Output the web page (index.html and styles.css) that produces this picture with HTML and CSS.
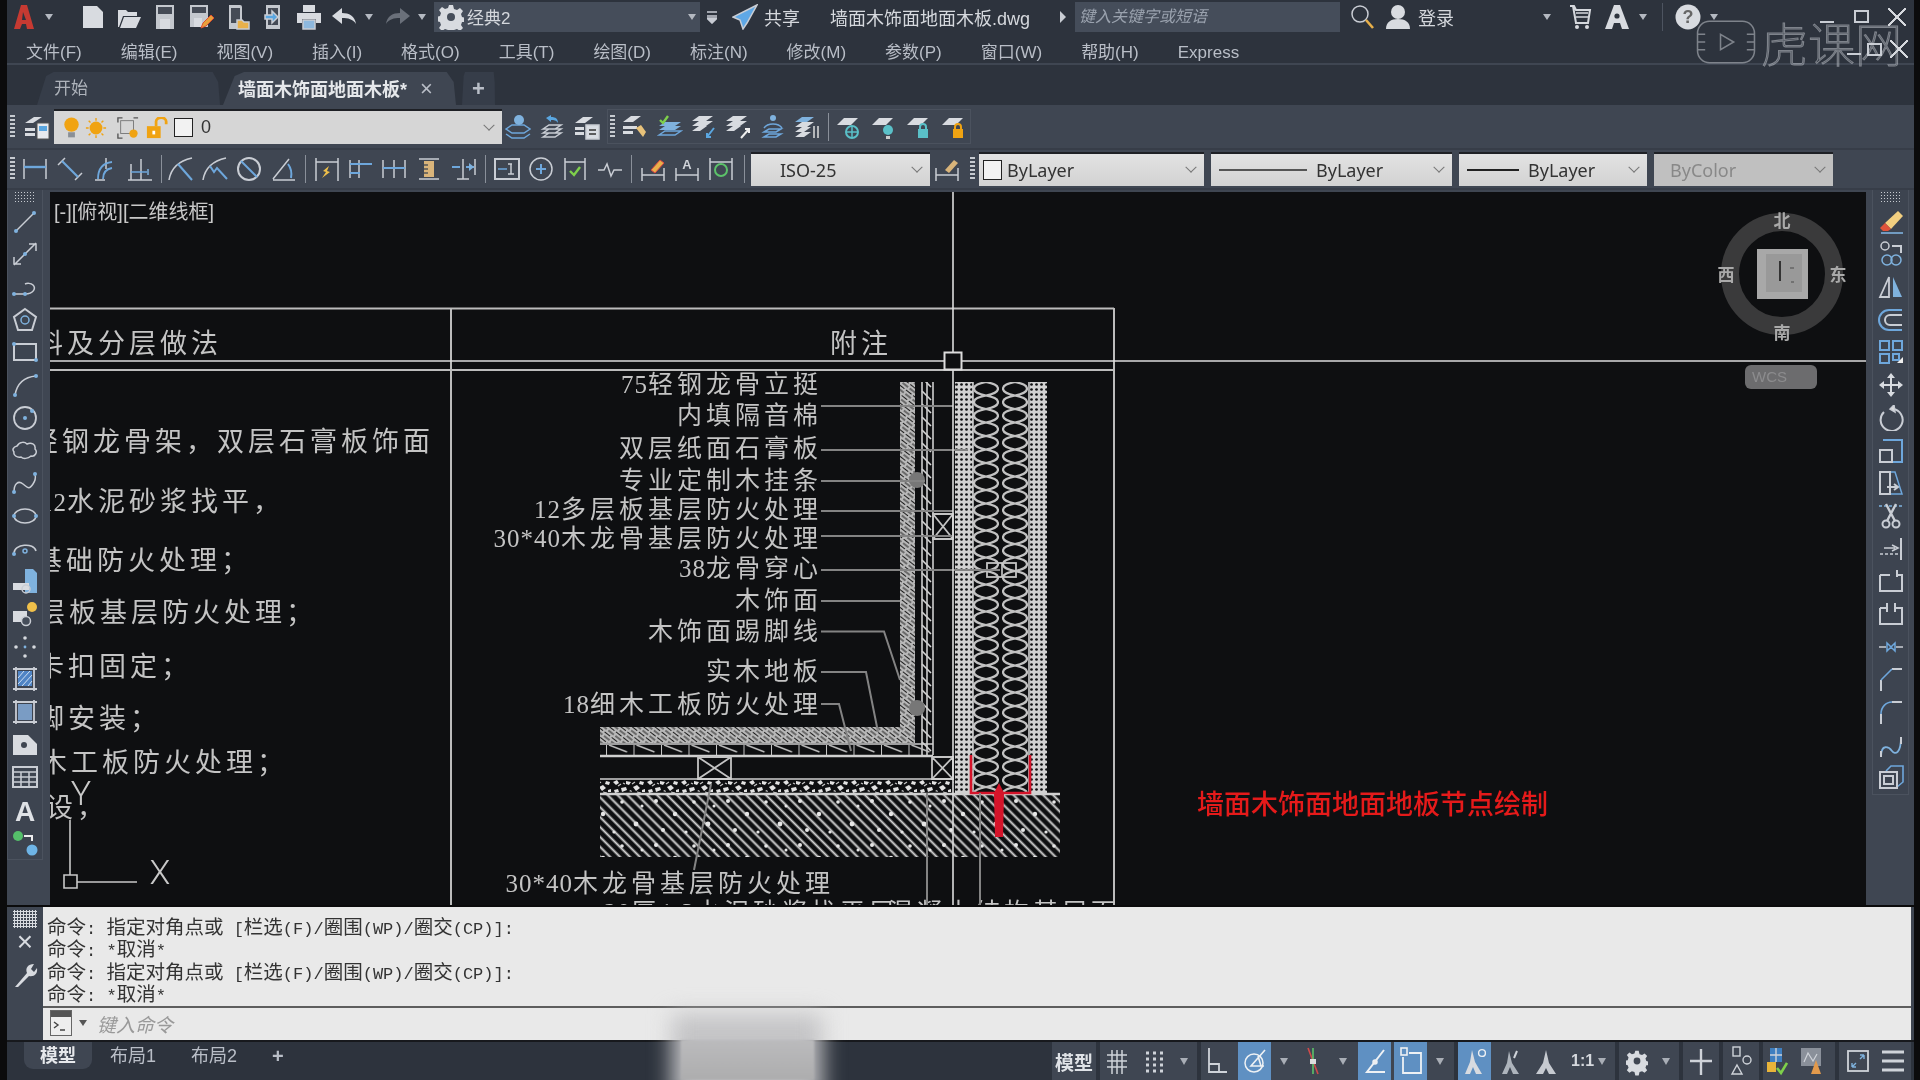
FILE: index.html
```html
<!DOCTYPE html>
<html lang="zh-CN">
<head>
<meta charset="utf-8">
<title>AutoCAD</title>
<link rel="stylesheet" href="styles.css">
</head>
<body>
<div class="app">

  <!-- title bar -->
  <header class="titlebar">
    <svg class="logo ml6" viewBox="0 0 22 26"><path d="M8 1h6l7 24h-7l-1-5H9l-2 5H1z" fill="#c63a32"/><path d="M10 8l-1 8h4z" fill="#2d333d"/></svg>
    <i class="caret ml10"></i>
    <svg class="ic ml27" viewBox="0 0 26 26"><path class="wf" d="M3 2h14l6 6v16H3z"/></svg>
    <svg class="ic ml10" viewBox="0 0 26 26"><path class="wf" d="M2 6h8l2 2h9v4H7L3 23H2z"/><path class="wf" d="M8 13h17l-5 11H4z"/></svg>
    <svg class="ic ml10" viewBox="0 0 26 26"><path class="gf" d="M4 1h18v24H4z"/><path class="dk" d="M6 3h14v7H6z"/><path class="wf" d="M8 15h10v10H8z"/></svg>
    <svg class="ic ml10" viewBox="0 0 26 26"><path class="gf" d="M2 1h18v22H2z"/><path class="dk" d="M4 3h14v6H4z"/><path class="wf" d="M6 14h8v9H6z"/><path d="M13 24l2-5 8-8 3 3-8 8z" fill="#e8a03a" stroke="#e05030" stroke-width="1"/></svg>
    <svg class="ic ml10" viewBox="0 0 26 26"><path class="gf" d="M5 1h11a2 2 0 0 1 2 2v22H5z"/><path class="dk" d="M7 4h9v15H7z"/><path d="M13 16h5l2 2h5v7H13z" fill="#e8b04a"/></svg>
    <svg class="ic ml10" viewBox="0 0 26 26"><path class="gf" d="M6 1h14v24H6z"/><path class="dk" d="M8 4h10v17H8z"/><path d="M5 11h7V7l6 6-6 6v-4H5z" fill="#5aa6e0"/></svg>
    <svg class="ic ml10" viewBox="0 0 26 26"><path class="wf" d="M7 1h12v7H7zM1 9h24v10h-5v-4H6v4H1z"/><path d="M7 16h12v9H7z" fill="#8db8de"/></svg>
    <svg class="ic ml9" viewBox="0 0 26 26"><path class="wf" d="M1 12l10-8v5c7 0 13 3 14 11-3-5-8-6-14-6v6z"/></svg>
    <i class="caret ml8"></i>
    <svg class="ic ml12 dim" viewBox="0 0 26 26"><path d="M25 12l-10-8v5C8 9 2 12 1 20c3-5 8-6 14-6v6z" fill="#6a707a" stroke="none"/></svg>
    <i class="caret ml7"></i>
    <div class="combo ml8">
      <svg class="ic" viewBox="0 0 26 26"><path class="wf" d="M11 1h4l1 4 3 1 3-2 3 3-2 3 1 3 4 1-1 4-3 0-1 3 2 3-3 3-3-2-3 1-1 4h-4l-1-4-3-1-3 2-3-3 2-3-1-3-4-1v-4l4-1 1-3-2-3 3-3 3 2 3-1z"/><circle cx="13" cy="13" r="4" fill="#454d5a" stroke="none"/></svg>
      <span class="combotext">经典2</span>
      <i class="caret push"></i>
    </div>
    <svg class="eq ml7" viewBox="0 0 10 14"><path d="M0 2h10M0 6h10M0 8l5 5 5-5z" stroke="#c8ccd4" stroke-width="1.6" fill="#c8ccd4"/></svg>
    <svg class="ic ml15" viewBox="0 0 26 26"><path d="M25 1L1 13l7 3 3 9 4-6z" fill="#5fa8e6"/></svg>
    <span class="tt ml6">共享</span>
    <span class="tt doc ml30">墙面木饰面地面木板.dwg</span>
    <i class="tri ml27"></i>
    <div class="search ml9">键入关键字或短语</div>
    <svg class="ic ml9" viewBox="0 0 26 26"><circle cx="11" cy="10" r="8"/><path d="M17 16l7 8" stroke="#e8b04a" stroke-width="2.6"/></svg>
    <svg class="ic ml10" viewBox="0 0 26 26"><circle class="wf" cx="13" cy="8" r="7"/><path class="wf" d="M1 25c0-7 5-10 12-10s12 3 12 10z"/></svg>
    <span class="tt ml7">登录</span>
    <i class="caret ml89"></i>
    <svg class="ic ml16" viewBox="0 0 26 26"><path d="M3 2h4l2 4h14l-2 13H8M6 2l3 17" stroke="#d5d8dd" stroke-width="2"/><path d="M9 9h12M9 13h12" stroke="#d5d8dd"/><circle class="wf" cx="10" cy="23" r="2"/><circle class="wf" cx="20" cy="23" r="2"/></svg>
    <svg class="ic ml11" viewBox="0 0 26 26"><path class="wf" d="M10 1h6l9 24h-7l-2-6h-6l-2 6H1z"/><circle cx="13" cy="12" r="2.6" fill="#2d333d" stroke="none"/></svg>
    <i class="caret ml9"></i>
    <i class="vsep ml15"></i>
    <svg class="ic ml12" viewBox="0 0 26 26"><circle class="wf" cx="13" cy="13" r="12.5"/><text class="qm" x="13" y="19">?</text></svg>
    <i class="caret ml9"></i>
    <div class="winctl ml102">
      <i class="wmin"></i><i class="wres ml20"></i><i class="wclose ml19"></i>
    </div>
  </header>

  <!-- menu bar -->
  <nav class="menubar">
    <span>文件(F)</span><span>编辑(E)</span><span>视图(V)</span><span>插入(I)</span><span>格式(O)</span><span>工具(T)</span><span>绘图(D)</span><span>标注(N)</span><span>修改(M)</span><span>参数(P)</span><span>窗口(W)</span><span>帮助(H)</span><span>Express</span>
    <div class="winctl2">
      <i class="wmin"></i><i class="wres ml6"></i><i class="wclose ml8"></i>
    </div>
  </nav>

  <!-- file tabs -->
  <div class="tabs">
    <div class="tab home">开始</div>
    <div class="tab active">墙面木饰面地面木板*<b class="x">×</b></div>
    <div class="tab plus">+</div>
  </div>

  <!-- layer toolbar -->
  <div class="toolbar layerbar">
    <i class="grip ml3"></i>
    <svg class="ic ml9" viewBox="0 0 26 26"><path class="wf" d="M1 9l9-6h8l-9 6zM1 14h10v3H1zM1 19h10v3H1z"/><path d="M13 9h12v16H13z" fill="#e8eaee" stroke="#555" stroke-width="1"/><path d="M15 12h8v5h-8z" fill="#5aa6e0" stroke="none"/></svg>
    <div class="layercombo ml4">
      <svg class="sm" viewBox="0 0 20 26"><circle cx="10" cy="9" r="8.5" fill="#f0a312"/><path d="M6 18h8v6H6z" fill="#8a8f96"/></svg>
      <svg class="sm2 ml5" viewBox="0 0 24 24"><circle cx="12" cy="12" r="7" fill="#f0a312"/><path d="M12 1v3M12 20v3M1 12h3M20 12h3M4 4l2 2M18 18l2 2M4 20l2-2M18 6l2-2" stroke="#f0a312" stroke-width="1.5"/></svg>
      <svg class="sm2 ml10" viewBox="0 0 24 24"><path d="M6 1H1v5M18 1h5M1 18v5h5" fill="none" stroke="#555" stroke-width="1.5"/><rect x="4" y="4" width="14" height="14" fill="none" stroke="#777"/><circle cx="18" cy="18" r="4.5" fill="#f0a312"/></svg>
      <svg class="sm2 ml7" viewBox="0 0 24 24"><rect x="1" y="10" width="15" height="13" fill="#f0a312"/><path d="M11 10V5a5 4 0 0 1 11 0v3" fill="none" stroke="#f0a312" stroke-width="3"/><rect x="7" y="15" width="3" height="4" fill="#fff"/></svg>
      <i class="swatch ml6"></i>
      <span class="lname ml8">0</span>
      <i class="chev push"></i>
    </div>
    <svg class="ic ml3" viewBox="0 0 26 26"><path class="bl" d="M1 15l6-4h12l6 4-6 4H7zM1 20l6 4h12l6-4"/><circle cx="14" cy="6" r="5" fill="#7fb2de" stroke="none"/></svg>
    <svg class="ic ml9" viewBox="0 0 26 26"><path d="M3 15l6-4h12l-6 4zM3 19l6-4h12l-6 4zM3 23l6-4h12l-6 4z"/><path d="M6 4l5-3v2c5 0 7 2 7 6-2-3-4-3-7-3v2z" fill="#5aa6e0" stroke="none"/></svg>
    <svg class="ic ml8" viewBox="0 0 26 26"><path class="wf" d="M1 9l8-6h10l-8 6zM1 13h9v3H1zM1 18h9v3H1z"/><path d="M12 11h13v14H12z" fill="#d9dde3"/><path d="M15 16h7M15 20h7" stroke="#333"/></svg>
    <div class="tgroup ml7">
      <i class="grip ml2"></i>
      <svg class="ic ml7" viewBox="0 0 26 26"><path class="wf" d="M1 8l8-6h10l-8 6zM1 12h14v3H1zM1 17h10v3H1z"/><path d="M14 14l7 9 3-5-5-7z" fill="#e8c27a" stroke="none"/></svg>
      <svg class="ic ml9" viewBox="0 0 26 26"><path d="M2 12l6-4h16l-6 4zM2 16l6-4h16l-6 4z" fill="#7fb2de" stroke="none"/><path class="bl" d="M2 21l6-4h16l-6 4z"/><path d="M3 6l3 3 5-7" stroke="#7ed04b" stroke-width="2.4"/></svg>
      <svg class="ic ml8" viewBox="0 0 26 26"><path class="wf" d="M1 7l7-5h14l-7 5zM1 12l7-5h14l-7 5zM1 17l7-5h8l-7 5z"/><path d="M23 14l-7 9m0-4v4h4" stroke="#5aa6e0" stroke-width="2"/></svg>
      <svg class="ic ml8" viewBox="0 0 26 26"><path class="wf" d="M1 7l7-5h14l-7 5zM1 12l7-5h14l-7 5zM1 17l7-5h8l-7 5z"/><path d="M16 24l8-9m-4 0h4v4" stroke="#eee" stroke-width="2"/></svg>
      <svg class="ic ml9" viewBox="0 0 26 26"><circle cx="13" cy="4" r="3" fill="#7fb2de" stroke="none"/><path class="bl" d="M4 14a10 7 0 0 1 18 0M4 18l5-3h12l-5 3zM4 23l5-3h12l-5 3z"/></svg>
      <svg class="ic ml8" viewBox="0 0 26 26"><path d="M1 8l7-5h12l-7 5z" fill="#7fb2de" stroke="none"/><path class="wf" d="M1 13l7-5h12l-7 5zM1 18l7-5h9l-7 5zM1 23l7-5h9l-7 5z"/><path d="M20 12v12M24 12v12" stroke="#ddd"/></svg>
      <i class="tsep ml8"></i>
      <svg class="ic ml7" viewBox="0 0 26 26"><path class="wf" d="M1 11l7-7h14l-7 7z"/><circle cx="16" cy="18" r="6" stroke="#5ac0c8" stroke-width="2"/><path d="M10 18h12M16 12v12" stroke="#5ac0c8"/></svg>
      <svg class="ic ml9" viewBox="0 0 26 26"><path class="wf" d="M1 11l7-7h14l-7 7z"/><circle cx="17" cy="16" r="5" fill="#5ac0c8" stroke="none"/><path d="M15 22h4v3h-4z" fill="#ccc" stroke="none"/></svg>
      <svg class="ic ml9" viewBox="0 0 26 26"><path class="wf" d="M1 11l7-7h14l-7 7z"/><rect x="12" y="15" width="10" height="9" fill="#5ac0c8" stroke="none"/><path d="M14 15v-2a3 3 0 0 1 6 0v2" stroke="#5ac0c8" stroke-width="2"/></svg>
      <svg class="ic ml9" viewBox="0 0 26 26"><path class="wf" d="M1 11l7-7h14l-7 7z"/><rect x="12" y="15" width="10" height="9" fill="#f0a312" stroke="none"/><path d="M14 15v-2a3 3 0 0 1 6 0v2" stroke="#f0a312" stroke-width="2"/></svg>
    </div>
  </div>

  <!-- dimension / style toolbar -->
  <div class="toolbar dimbar">
    <i class="grip ml3"></i>
    <svg class="ic ml7" viewBox="0 0 26 26"><path d="M2 3v20M24 3v20"/><path class="bl" d="M2 11h22" stroke-width="2.4"/></svg>
    <svg class="ic ml9" viewBox="0 0 26 26"><path d="M1 9l7-7M18 24l7-7"/><path class="bl" d="M5 5l16 16" stroke-width="2.2"/></svg>
    <svg class="ic ml9" viewBox="0 0 26 26"><path d="M3 24h10M14 2v11"/><path class="bl" d="M6 23C6 12 11 7 20 6M11 23c0-7 3-10 9-11" stroke-width="1.8"/></svg>
    <svg class="ic ml9" viewBox="0 0 26 26"><path d="M1 24h24M4 24V8M14 24V3"/><path class="bl" d="M4 16h16"/><path d="M21 13v6" stroke="#7fb2de"/></svg>
    <i class="tsep ml8"></i>
    <svg class="ic ml6" viewBox="0 0 26 26"><path d="M1 24C3 12 10 5 24 2"/><path class="bl" d="M10 8l14 16" stroke-width="2"/></svg>
    <svg class="ic ml8" viewBox="0 0 26 26"><path d="M1 24C3 12 10 5 24 2"/><path class="bl" d="M8 10l4 6 3-4 10 11" stroke-width="2"/></svg>
    <svg class="ic ml8" viewBox="0 0 26 26"><circle cx="13" cy="13" r="11" stroke-width="2"/><path class="bl" d="M5 5l16 16" stroke-width="2"/></svg>
    <svg class="ic ml9" viewBox="0 0 26 26"><path d="M2 24h22M2 23L18 3"/><path class="bl" d="M17 8c3 4 4 9 3 14" stroke-width="2"/></svg>
    <i class="tsep ml8"></i>
    <svg class="ic ml8" viewBox="0 0 26 26"><path d="M2 2v23M24 2v23M2 6h22"/><path d="M15 10l-6 5 3 1-4 6 8-6-3-1z" fill="#f0c04a" stroke="none"/></svg>
    <svg class="ic ml8" viewBox="0 0 26 26"><path d="M2 4v18M11 4v18"/><path class="bl" d="M2 8h22M2 17h10" stroke-width="2"/></svg>
    <svg class="ic ml7" viewBox="0 0 26 26"><path d="M2 4v18M13 4v18M24 4v18"/><path class="bl" d="M2 12h22" stroke-width="2"/></svg>
    <svg class="ic ml9" viewBox="0 0 26 26"><path d="M3 3h20M3 23h20"/><rect x="8" y="5" width="10" height="16" fill="#d9b47a" stroke="none"/><path d="M8 9h4M8 13h4M8 17h4" stroke="#555"/></svg>
    <svg class="ic ml9" viewBox="0 0 26 26"><path d="M12 3v20M24 3v16M6 23h12"/><path class="bl" d="M1 11h8M15 11h8" stroke-width="2"/><path d="M18 7l5 4-5 4z" fill="#7fb2de" stroke="none"/></svg>
    <i class="tsep ml8"></i>
    <svg class="ic ml8" viewBox="0 0 26 26"><rect x="1" y="3" width="24" height="20" stroke-width="2"/><path class="bl" d="M4 13h9"/><path d="M17 8v10M14 8h4M14 18h6"/></svg>
    <svg class="ic ml8" viewBox="0 0 26 26"><circle cx="13" cy="13" r="11"/><path class="bl" d="M13 8v10M8 13h10" stroke-width="2"/></svg>
    <svg class="ic ml8" viewBox="0 0 26 26"><path d="M3 2v22M23 2v22M3 6h20"/><path d="M8 15l4 4 6-8" stroke="#7ed04b" stroke-width="2.4"/></svg>
    <svg class="ic ml9" viewBox="0 0 26 26"><path d="M1 14h6l3-6 4 12 3-6h8"/></svg>
    <i class="tsep ml8"></i>
    <svg class="ic ml8" viewBox="0 0 26 26"><path d="M2 12v13M24 12v13M2 19h22"/><path d="M11 14l9-10 4 3-9 10z" fill="#e8b04a" stroke="#d44" stroke-width="1"/></svg>
    <svg class="ic ml8" viewBox="0 0 26 26"><path d="M2 12v13M24 12v13M2 19h22"/><text class="mini" x="13" y="13">A</text></svg>
    <svg class="ic ml8" viewBox="0 0 26 26"><path d="M2 2v22M24 2v22M2 6h22"/><circle cx="13" cy="14" r="6" stroke="#5cc26a" stroke-width="2"/></svg>
    <i class="tsep ml10"></i>
    <div class="dd iso ml6"><span class="ddtext">ISO-25</span><i class="chev push"></i></div>
    <svg class="ic ml4" viewBox="0 0 26 26"><path d="M2 12v13M24 12v13M2 19h22"/><path d="M11 14l9-10 4 3-9 10z" fill="#d9b47a" stroke="none"/></svg>
    <i class="grip ml10"></i>
    <div class="dd bylayer ml4"><i class="swatch small"></i><span class="ddtext ml5">ByLayer</span><i class="chev push"></i></div>
    <div class="dd bytype ml7"><i class="ltline"></i><span class="ddtext ml9">ByLayer</span><i class="chev push"></i></div>
    <div class="dd byweight ml7"><i class="ltline short"></i><span class="ddtext ml9">ByLayer</span><i class="chev push"></i></div>
    <div class="dd bycolor ml7"><span class="ddtext">ByColor</span><i class="chev push"></i></div>
  </div>

  <!-- workspace -->
  <main class="work">
    <aside class="dock">
      <i class="hgrip"></i>
      <svg class="ic" viewBox="0 0 26 26"><path d="M4 22L22 4"/><circle class="nd" cx="4" cy="22" r="2"/><circle class="nd" cx="22" cy="4" r="2"/></svg>
      <svg class="ic" viewBox="0 0 26 26"><path d="M2 24L24 2M17 3h7v7M9 23H2v-7"/><circle class="nd" cx="13" cy="13" r="2"/></svg>
      <svg class="ic" viewBox="0 0 26 26"><path d="M2 20h11c9 0 11-6 8-9-2-2-6-2-8-1"/><circle class="nd" cx="2" cy="20" r="2"/><circle class="nd" cx="13" cy="20" r="2"/></svg>
      <svg class="ic" viewBox="0 0 26 26"><path d="M13 2l11 8-4 13H6L2 10z" stroke-width="2"/><circle cx="13" cy="13" r="4" stroke="#7fb2de"/></svg>
      <svg class="ic" viewBox="0 0 26 26"><rect x="2" y="5" width="22" height="16" stroke-width="2"/><circle class="nd" cx="2" cy="5" r="2"/><circle class="nd" cx="24" cy="21" r="2"/></svg>
      <svg class="ic" viewBox="0 0 26 26"><path d="M3 23C5 12 12 5 24 4"/><circle class="nd" cx="3" cy="23" r="2"/><circle class="nd" cx="24" cy="4" r="2"/></svg>
      <svg class="ic" viewBox="0 0 26 26"><circle cx="13" cy="13" r="11" stroke-width="1.8"/><circle class="nd" cx="13" cy="13" r="2"/><circle class="nd" cx="20" cy="6" r="2"/></svg>
      <svg class="ic" viewBox="0 0 26 26"><path d="M5 8c3-5 8-4 10-2 4-2 9 0 8 5 3 3 0 8-4 7-3 3-8 3-10 1-4 1-8-2-7-5-2-2-1-5 3-6z"/></svg>
      <svg class="ic" viewBox="0 0 26 26"><path d="M2 22c0-8 4-12 9-8s6 6 10 0 2-8 2-10"/><circle class="nd" cx="2" cy="22" r="2"/><circle class="nd" cx="23" cy="4" r="2"/></svg>
      <svg class="ic" viewBox="0 0 26 26"><ellipse cx="13" cy="13" rx="11" ry="7"/><circle class="nd" cx="2" cy="13" r="2"/><circle class="nd" cx="24" cy="13" r="2"/></svg>
      <svg class="ic" viewBox="0 0 26 26"><path d="M2 17C2 8 22 6 24 15"/><circle cx="13" cy="15" r="2" stroke="#7fb2de"/><circle class="nd" cx="2" cy="18" r="2"/></svg>
      <svg class="ic" viewBox="0 0 26 26"><path d="M13 1h8l4 4v20H13z" fill="#7fb2de" stroke="none"/><path class="wf" d="M1 15h16v7H1z"/><circle cx="14" cy="21" r="4"/></svg>
      <svg class="ic" viewBox="0 0 26 26"><path class="wf" d="M1 10h14v11H1z"/><circle cx="14" cy="20" r="4.5" fill="#454d5a"/><circle cx="20" cy="6" r="5" fill="#f0c04a" stroke="none"/></svg>
      <svg class="ic" viewBox="0 0 26 26"><circle class="pt" cx="13" cy="4" r="1.8"/><circle class="pt" cx="4" cy="13" r="1.8"/><circle class="pt" cx="22" cy="13" r="1.8"/><circle class="pt" cx="13" cy="22" r="1.8"/><circle class="nd" cx="13" cy="13" r="1.4"/></svg>
      <svg class="ic" viewBox="0 0 26 26"><path d="M1 3h24M1 23h24M4 1v24M22 1v24" stroke-width="1.8"/><path d="M6 5h14v15H6z" fill="#4f84c4" stroke="none"/><path d="M6 12l6-7M6 18l12-13M10 20l10-11M16 20l4-5" stroke="#cfe0f2" stroke-width="1"/></svg>
      <svg class="ic" viewBox="0 0 26 26"><path d="M1 3h24M1 23h24M4 1v24M22 1v24" stroke-width="1.8"/><rect class="gr" x="6" y="5" width="14" height="16"/></svg>
      <svg class="ic" viewBox="0 0 26 26"><path class="wf" d="M1 3h15l9 9v11H1z"/><circle cx="12" cy="13" r="3" fill="#3f4652" stroke="none"/></svg>
      <svg class="ic" viewBox="0 0 26 26"><rect x="1" y="3" width="24" height="20" stroke-width="2"/><path d="M1 8h24M1 13h24M1 18h24M9 8v15M17 8v15"/></svg>
      <svg class="ic" viewBox="0 0 26 26"><text class="bigA" x="13" y="24">A</text></svg>
      <svg class="ic" viewBox="0 0 26 26"><circle cx="6" cy="6" r="5" fill="#55c06a" stroke="none"/><circle cx="20" cy="20" r="5.5" fill="#6eb4e6" stroke="none"/><path d="M12 6h8v5" stroke="#eee" stroke-width="2"/></svg>
    </aside>

    <div class="canvas">
      <svg class="cad" viewBox="50 192 1816 713" width="1816" height="713">
        <defs>
          <pattern id="wood" width="9" height="7" patternUnits="userSpaceOnUse" patternTransform="rotate(38)">
            <rect width="9" height="7" fill="#b8b8b8"/><path d="M0 1.5h7M2 5h7" stroke="#1c1c1c" stroke-width="1.1"/>
          </pattern>
          <pattern id="stud" width="12" height="13" x="921" patternUnits="userSpaceOnUse">
            <path d="M1 1l9 9" stroke="#d6d6d6" stroke-width="1.6"/>
          </pattern>
          <pattern id="gyp" width="5" height="5" x="954" y="382" patternUnits="userSpaceOnUse">
            <rect width="5" height="5" fill="#d2d2d2"/><circle cx="2.5" cy="2.5" r="1.35" fill="#0e0f11"/>
          </pattern>
          <pattern id="loopA" width="26" height="27" x="973" y="382" patternUnits="userSpaceOnUse">
            <path d="M13 0C20 1.5 25 3 25 6.75C25 10.5 20 12 13 13.5C6 15 1 16.5 1 20.25C1 24 6 25.5 13 27M13 0C6 1.5 1 3 1 6.75C1 10.5 6 12 13 13.5C20 15 25 16.5 25 20.25C25 24 20 25.5 13 27" fill="none" stroke="#c2c2c2" stroke-width="2.2"/>
          </pattern>
          <pattern id="loopB" href="#loopA" x="1002"/>
          <pattern id="batt" width="27.5" height="11" x="606" y="744" patternUnits="userSpaceOnUse">
            <path d="M0 0v11" stroke="#c8c8c8" stroke-width="2"/><path d="M3 1l18 7" stroke="#bcbcbc" stroke-width="1.4"/>
          </pattern>
          <pattern id="pebble" width="34" height="15" y="779" patternUnits="userSpaceOnUse">
            <path d="M1 3l4-2 2 3-3 2zM9 9l5-1 1 3-5 2zM14 2l5 1-2 3-3-1zM21 8l4-2 3 3-4 3zM28 2l4 1-1 3-4-1zM2 11l4-1 1 3-4 1zM17 12l2-1 1 2zM30 11l3-1 0 3-3 0z" fill="#e2e2e2"/>
            <path d="M6 7l3-2M20 5l3-2M11 4l2 1M25 13l4 1" stroke="#c8c8c8" stroke-width="1.2"/>
          </pattern>
          <pattern id="hatch" width="7" height="7" y="794" patternUnits="userSpaceOnUse" patternTransform="rotate(45)">
            <path d="M0 3.5h7" stroke="#d2d2d2" stroke-width="2"/>
          </pattern>
          <pattern id="speck" width="72" height="44" y="794" patternUnits="userSpaceOnUse">
            <circle cx="8" cy="7" r="2" fill="#e6e6e6"/><circle cx="27" cy="20" r="2.2" fill="#e6e6e6"/><circle cx="46" cy="8" r="1.8" fill="#e6e6e6"/><circle cx="60" cy="30" r="2.4" fill="#e6e6e6"/><circle cx="15" cy="36" r="2" fill="#e6e6e6"/><circle cx="38" cy="38" r="1.6" fill="#e6e6e6"/><circle cx="66" cy="12" r="1.5" fill="#e6e6e6"/>
          </pattern>
        </defs>

        <!-- view label -->
        <text class="vlabel" x="54" y="219">[-][俯视][二维线框]</text>

        <!-- table frame -->
        <path class="tline" d="M50 308.5H1114M50 370H1114M451 308V905M1114 308V905"/>
        <text class="lf" x="222" y="353">料及分层做法</text>
        <text class="lf" x="892" y="353">附注</text>

        <text class="lf" x="434" y="451">轻钢龙骨架，双层石膏板饰面</text>
        <text class="lf" x="284" y="511"><tspan class="nm">12</tspan>水泥砂浆找平，</text>
        <text class="lf" x="252" y="570">基础防火处理；</text>
        <text class="lf" x="317" y="622">层板基层防火处理；</text>
        <text class="lf" x="192" y="676">卡扣固定；</text>
        <text class="lf" x="161" y="728">脚安装；</text>
        <text class="lf" x="288" y="772">木工板防火处理；</text>
        <text class="lf" x="108" y="817">设，</text>

        <!-- UCS icon -->
        <path class="ucs" d="M70 820V875M77 882H137M64 875h13v13H64z"/>
        <text class="ucst" x="81" y="805">Y</text>
        <text class="ucst" x="160" y="884">X</text>

        <!-- callouts -->
        <text class="lb" x="822" y="393"><tspan class="nm">75</tspan>轻钢龙骨立挺</text>
        <text class="lb" x="822" y="424">内填隔音棉</text>
        <text class="lb" x="822" y="457">双层纸面石膏板</text>
        <text class="lb" x="822" y="489">专业定制木挂条</text>
        <text class="lb" x="822" y="518"><tspan class="nm">12</tspan>多层板基层防火处理</text>
        <text class="lb" x="822" y="547"><tspan class="nm">30*40</tspan>木龙骨基层防火处理</text>
        <text class="lb" x="822" y="577"><tspan class="nm">38</tspan>龙骨穿心</text>
        <text class="lb" x="822" y="609">木饰面</text>
        <text class="lb" x="822" y="640">木饰面踢脚线</text>
        <text class="lb" x="822" y="680">实木地板</text>
        <text class="lb" x="822" y="713"><tspan class="nm">18</tspan>细木工板防火处理</text>
        <text class="lb" x="834" y="892"><tspan class="nm">30*40</tspan>木龙骨基层防火处理</text>
        <text class="lb" x="898" y="921"><tspan class="nm">20</tspan>厚<tspan class="nm">1:3</tspan>水泥砂浆找平层</text>
        <text class="lb" x="1120" y="921">混凝土结构基层面</text>

        <!-- wall layers -->
        <rect x="900" y="382" width="15" height="361" fill="url(#wood)"/>
        <rect x="921" y="382" width="12" height="373" fill="url(#stud)"/>
        <path class="wl" d="M922 382V755M927 382V755M933 382V755"/>
        <rect x="955" y="382" width="18" height="412" fill="url(#gyp)"/>
        <rect x="1030" y="382" width="17" height="412" fill="url(#gyp)"/>
        <rect x="973" y="382" width="26" height="412" fill="url(#loopA)"/>
        <rect x="1002" y="382" width="26" height="412" fill="url(#loopB)"/>
        <path class="wl" d="M1029 382V794M973 382V794"/>
        <circle cx="917" cy="480" r="8" fill="#777"/>
        <circle cx="917" cy="708" r="8" fill="#777"/>
        <rect class="bx" x="987" y="563" width="29" height="14"/>
        <path class="wl" d="M1002 563V577"/>

        <!-- floor layers -->
        <rect x="600" y="727" width="313" height="16" fill="url(#wood)"/>
        <path class="wl" d="M600 744H933"/>
        <rect x="600" y="745" width="333" height="10" fill="url(#batt)"/>
        <path class="wl2" d="M600 756H933"/>
        <path class="bx" d="M698 757h33v22h-33zM698 757l33 22M731 757l-33 22"/>
        <path class="bx" d="M932 757h21v22h-21zM932 757l21 22M953 757l-21 22"/>
        <path class="bx" d="M933 514h20v25h-20zM933 514l20 25M953 514l-20 25"/>
        <rect x="600" y="779" width="354" height="14" fill="url(#pebble)"/>
        <path class="wl" d="M600 779H953"/>
        <rect x="600" y="795" width="460" height="62" fill="url(#hatch)"/>
        <rect x="600" y="795" width="460" height="62" fill="url(#speck)"/>
        <path class="wl2" d="M600 794H1060"/>

        <!-- red anchor and channel -->
        <path class="redl" d="M971 755V793H1030V755"/>
        <path class="redf" d="M994 793l5-10 5 10-1 44h-8z"/>

        <!-- leader lines -->
        <path class="ld" d="M821 406H953M821 450H968M821 481H925M821 511H953M821 536H953M821 570H1000M821 601H900M821 631.5H884L900 680M821 672H866L878 732M821 704H839L851 751M694 870L711 784M927 793V905M980 793V905"/>

        <!-- red caption -->
        <text class="cap" x="1197" y="814">墙面木饰面地面地板节点绘制</text>

        <!-- crosshair -->
        <path class="cross" d="M50 361H1866M953 190V905"/>
        <rect class="pick" x="944.5" y="352.5" width="17" height="17"/>

        <!-- view cube -->
        <circle class="ring" cx="1782" cy="274" r="52"/>
        <rect x="1757" y="249" width="51" height="50" fill="#a8a8a8"/>
        <rect x="1766" y="254" width="36" height="38" fill="#999"/>
        <path d="M1780 261V281" stroke="#333" stroke-width="2"/>
        <path d="M1790 268h4M1791 282h3" stroke="#666" stroke-width="1.5"/>
        <text class="cmp" x="1782" y="227">北</text>
        <text class="cmp" x="1782" y="339">南</text>
        <text class="cmp" x="1726" y="281">西</text>
        <text class="cmp" x="1838" y="281">东</text>
        <rect x="1745" y="365" width="72" height="24" rx="6" fill="#6c6c6e"/>
        <text class="wcs" x="1752" y="382">WCS</text>
      </svg>
    </div>

    <aside class="dock dockr">
      <i class="hgrip"></i>
      <svg class="ic" viewBox="0 0 26 26"><path d="M3 24h22" stroke="#7fb2de" stroke-width="1.6"/><path d="M7 14L20 2l5 5-12 13z" fill="#f2cf80" stroke="none"/><path d="M7 14l6 6-3 2H5l-3-3z" fill="#e0533a" stroke="none"/></svg>
      <svg class="ic" viewBox="0 0 26 26"><circle cx="7" cy="5" r="4"/><path d="M14 5h9v7" stroke-width="2"/><circle cx="9" cy="19" r="5" stroke="#7fb2de"/><circle cx="18" cy="19" r="5" stroke="#7fb2de"/></svg>
      <svg class="ic" viewBox="0 0 26 26"><path d="M11 3v20H2z" stroke-width="1.8"/><path d="M15 3v20h9z" fill="#7fb2de" stroke="none"/></svg>
      <svg class="ic" viewBox="0 0 26 26"><path class="bl" d="M24 3H11a10 10 0 0 0 0 20h13" stroke-width="2"/><path d="M24 8H12a5 5 0 0 0 0 10h12" stroke-width="2"/></svg>
      <svg class="ic" viewBox="0 0 26 26"><path class="bl" d="M2 2h9v9H2zM15 2h9v9h-9zM2 15h9v9H2zM15 15h6v6h-6z" stroke-width="2"/><path d="M19 24l6-6v6z" fill="#eee" stroke="none"/></svg>
      <svg class="ic" viewBox="0 0 26 26"><path class="wf" d="M13 1l4 5h-3v6h6V9l5 4-5 4v-3h-6v6h3l-4 5-4-5h3v-6H6v3l-5-4 5-4v3h6V6H9z"/></svg>
      <svg class="ic" viewBox="0 0 26 26"><path d="M6 7a11 11 0 1 0 9-3" stroke-width="2"/><path d="M16 0l-4 4 5 3z" fill="#ddd"/></svg>
      <svg class="ic" viewBox="0 0 26 26"><path class="bl" d="M5 2h19v22H13" stroke-width="2"/><rect x="2" y="12" width="12" height="12" stroke-width="2"/></svg>
      <svg class="ic" viewBox="0 0 26 26"><rect x="2" y="2" width="10" height="22" stroke-width="2"/><path class="bl" d="M13 2h4l7 22H13"/><path d="M9 17h10m-3-3l4 3-4 3" stroke-width="2"/></svg>
      <svg class="ic" viewBox="0 0 26 26"><path d="M1 3h24" stroke-dasharray="3 2" stroke="#7fb2de"/><path d="M8 1l9 17M18 1l-9 17" stroke-width="2.4"/><circle cx="8" cy="21" r="3.5" stroke-width="2"/><circle cx="18" cy="21" r="3.5" stroke-width="2"/></svg>
      <svg class="ic" viewBox="0 0 26 26"><path d="M23 2v22" stroke-width="2"/><path d="M2 18h18" stroke-dasharray="3 2"/><path d="M6 12h11m-3-3l6 3-6 3" stroke-width="1.6"/></svg>
      <svg class="ic" viewBox="0 0 26 26"><path d="M2 7h10M20 7h4v16H2V7M19 2v7" stroke-width="2"/></svg>
      <svg class="ic" viewBox="0 0 26 26"><path d="M2 7h7M17 7h7v16H2V7M9 2v9M17 2v9" stroke-width="2"/></svg>
      <svg class="ic" viewBox="0 0 26 26"><path d="M1 13h7M18 13h7"/><path class="bl" d="M9 9l4 4-4 4zM17 9l-4 4 4 4z"/></svg>
      <svg class="ic" viewBox="0 0 26 26"><path d="M3 25V14M14 3h10" stroke-width="2"/><path class="bl" d="M3 14L14 3" stroke-width="1.6"/></svg>
      <svg class="ic" viewBox="0 0 26 26"><path d="M3 25V15M14 3h10" stroke-width="2"/><path class="bl" d="M3 15C3 8 8 3 14 3" stroke-width="1.6"/></svg>
      <svg class="ic" viewBox="0 0 26 26"><path d="M3 25c0-14 8-10 11-6s9 3 9-14" stroke="#7fb2de" stroke-width="1.8"/><path d="M3 25v-6M23 5v7" stroke-width="2"/></svg>
      <svg class="ic" viewBox="0 0 26 26"><path class="bl" d="M8 7l5-5h12v16l-6 5" stroke-width="1.6"/><path d="M2 8h17v16H2zM6 12h9v8H6z" stroke-width="2"/></svg>
    </aside>
  </main>

  <!-- command line -->
  <section class="cmd">
    <div class="cmdside">
      <i class="hgrip big"></i>
      <span class="cmdx">×</span>
      <svg class="ic cmdw" viewBox="0 0 26 26"><path class="wf" d="M3 25l12-14c-2-5 1-9 7-9l-3 5 3 3 3-4c1 6-3 9-8 8L6 25z"/></svg>
    </div>
    <div class="cmdmain">
      <div class="history">
        <div class="hline"><span class="cn">命令</span>: <span class="cn">指定对角点或</span> [<span class="cn">栏选</span>(F)/<span class="cn">圈围</span>(WP)/<span class="cn">圈交</span>(CP)]:</div>
        <div class="hline"><span class="cn">命令</span>: *<span class="cn">取消</span>*</div>
        <div class="hline"><span class="cn">命令</span>: <span class="cn">指定对角点或</span> [<span class="cn">栏选</span>(F)/<span class="cn">圈围</span>(WP)/<span class="cn">圈交</span>(CP)]:</div>
        <div class="hline"><span class="cn">命令</span>: *<span class="cn">取消</span>*</div>
      </div>
      <div class="cmdinput">
        <svg class="cmdicon" viewBox="0 0 22 26"><rect x="0.5" y="0.5" width="21" height="25" fill="#eee" stroke="#666"/><rect x="1" y="1" width="20" height="6" fill="#555"/><path d="M4 12l4 3-4 3M10 20h5" fill="none" stroke="#444" stroke-width="1.4"/></svg>
        <i class="caret dark ml7"></i>
        <span class="ph ml10">键入命令</span>
      </div>
    </div>
  </section>

  <!-- status bar -->
  <footer class="status">
    <div class="ltabs">
      <span class="ltab cur">模型</span><span class="ltab l1">布局1</span><span class="ltab l2">布局2</span><span class="ltab lp">+</span>
    </div>
    <div class="sgroups">
      <div class="sg w44"><b class="sgtext">模型</b></div>
      <div class="sg w97">
        <svg class="st ml6" viewBox="0 0 22 30"><path d="M1 9h20M1 15h20M1 21h20M6 4v24M11 4v24M16 4v24"/></svg>
        <svg class="st ml15" viewBox="0 0 22 30"><path class="dots" d="M3 7h3M10 7h3M17 7h3M3 13h3M10 13h3M17 13h3M3 19h3M10 19h3M17 19h3M3 25h3M10 25h3M17 25h3"/></svg>
        <i class="caret big ml15"></i>
      </div>
      <div class="sg w253">
        <svg class="st ml5" viewBox="0 0 22 30"><path d="M3 2v24h18M3 18h10v8" stroke-width="1.8"/></svg>
        <span class="sb ml10"><svg class="st" viewBox="0 0 22 30"><circle cx="10" cy="17" r="9"/><path d="M21 4L7 20h13M14 10l3 10" stroke-width="1.6"/></svg></span>
        <i class="caret big ml9"></i>
        <svg class="st ml14" viewBox="0 0 22 30"><path d="M6 2l10 26" stroke="#d04a4a" stroke-width="1.6"/><path d="M11 2v26" stroke="#5cc26a" stroke-width="1.6"/><rect x="8" y="13" width="6" height="5" fill="#ddd" stroke="none"/></svg>
        <i class="caret big ml15"></i>
        <span class="sb ml11"><svg class="st" viewBox="0 0 22 30"><path d="M20 4L3 26h18" stroke-width="2"/><circle cx="11" cy="16" r="2" fill="#eee"/></svg></span>
        <span class="sb ml3"><svg class="st" viewBox="0 0 22 30"><path d="M9 7h12v20H3V11" stroke-width="1.8"/><rect x="1" y="2" width="6" height="7" stroke-width="1.6"/></svg></span>
        <i class="caret big ml9"></i>
      </div>
      <div class="sg w157">
        <span class="sb"><svg class="st" viewBox="0 0 22 30"><path class="wf" d="M8 4l3 12 7 12h-6l-3-7-3 7H1l5-12z"/><circle cx="18" cy="7" r="3.4" stroke-width="1.4"/></svg></span>
        <svg class="st ml10" viewBox="0 0 22 30"><path d="M8 5l3 12 7 11h-6l-3-7-3 7H1l5-11z" fill="#aeb4bc" stroke="none"/><path d="M16 5l-3 7" stroke-width="2"/></svg>
        <svg class="st ml12" viewBox="0 0 22 30"><path d="M11 4l3 13 7 11h-7l-3-6-3 6H1l7-11z" fill="#c6cad0" stroke="none"/></svg>
        <span class="scale ml14">1:1</span>
        <i class="caret big ml5"></i>
      </div>
      <div class="sg w60">
        <svg class="st ml7" viewBox="0 0 26 26"><path class="wf" d="M11 1h4l1 4 3 1 3-2 3 3-2 3 1 3 4 1-1 4-3 0-1 3 2 3-3 3-3-2-3 1-1 4h-4l-1-4-3-1-3 2-3-3 2-3-1-3-4-1v-4l4-1 1-3-2-3 3-3 3 2 3-1z"/><circle cx="13" cy="13" r="4" fill="#3f4652" stroke="none"/></svg>
        <i class="caret big ml14"></i>
      </div>
      <div class="sg w36"><svg class="st ml7" viewBox="0 0 22 30"><path d="M0 15h22M11 3v26" stroke-width="2.4"/></svg></div>
      <div class="sg w36"><svg class="st ml7" viewBox="0 0 22 30"><rect x="3" y="1" width="7" height="9" stroke-width="1.4"/><circle cx="17" cy="14" r="4" stroke-width="1.4"/><path d="M7 19l5 9H2z" stroke-width="1.4"/></svg></div>
      <div class="sg w72">
        <svg class="st ml3" viewBox="0 0 22 30"><path d="M4 2h12v14H4z" fill="#3f7fc0" stroke="none"/><path d="M10 2v14M4 9h12" stroke-width="1.4"/><rect x="1" y="16" width="9" height="10" fill="#e8b43a" stroke="none"/><path d="M11 22l4 5 6-10" stroke="#7ed04b" stroke-width="2.6"/></svg>
        <svg class="st ml12" viewBox="0 0 22 30"><rect x="1" y="2" width="20" height="18" fill="#8a909a" stroke="none"/><path d="M4 16l4-9 5 8 4-7" stroke-width="1.2"/><path d="M11 28l5-14 5 14z" fill="#e39a4c" stroke="none"/></svg>
      </div>
      <div class="sg w72">
        <svg class="st ml8" viewBox="0 0 22 30"><rect x="1" y="5" width="20" height="20" stroke-width="1.8"/><path d="M5 21l4-4M5 21v-4M5 21h4M17 9l-4 4M17 9v4M17 9h-4" stroke-width="1.4" stroke="#7fb2de"/></svg>
        <svg class="st ml13" viewBox="0 0 22 30"><path d="M0 6h22M0 15h22M0 24h22" stroke-width="3.2"/></svg>
      </div>
    </div>
  </footer>

  <!-- overlays -->
  <div class="blurpatch"></div>
  <div class="blurcore"></div>
  <div class="watermark">
    <svg class="wm-logo" viewBox="0 0 58 42"><rect x="3" y="2" width="52" height="38" rx="11"/><path d="M24 14l12 7-12 7z"/><path d="M3 14h7M3 21h7M3 28h7M48 14h7M48 21h7M48 28h7"/></svg>
    <span class="wm-text">虎课网</span>
  </div>
</div>
</body>
</html>
```

FILE: styles.css
```css
* { box-sizing: border-box; }
html, body { margin: 0; padding: 0; background: #0b0b0c; }

.app {
  position: relative;
  width: 1920px;
  height: 1080px;
  overflow: hidden;
  background: #0b0b0c;
  padding: 0 6px 0 7px;
  display: flex;
  flex-direction: column;
  font-family: "Liberation Sans", "Noto Sans CJK SC", sans-serif;
  filter: blur(0.45px);
}

/* spacing helpers */
.ml2{margin-left:2px}.ml3{margin-left:3px}.ml4{margin-left:4px}.ml5{margin-left:5px}.ml6{margin-left:6px}.ml7{margin-left:7px}.ml8{margin-left:8px}.ml9{margin-left:9px}.ml10{margin-left:10px}.ml11{margin-left:11px}.ml12{margin-left:12px}.ml13{margin-left:13px}.ml14{margin-left:14px}.ml15{margin-left:15px}.ml16{margin-left:16px}.ml19{margin-left:19px}.ml20{margin-left:20px}.ml27{margin-left:27px}.ml30{margin-left:30px}.ml89{margin-left:89px}.ml102{margin-left:102px}
.push { margin-left: auto; }

/* icons */
.ic { width: 26px; height: 26px; flex: none; fill: none; stroke: #c9cdd4; stroke-width: 1.5; display: block; }
.wf { fill: #d8dbe0; stroke: none; }
.gf { fill: #c4c8ce; stroke: none; }
.dk { fill: #454b56; stroke: none; }
.bl { stroke: #6ea7dc; }
.nd { fill: #7fb2de; stroke: none; }
.pt { fill: #d5d8dd; stroke: none; }
.mini { font: 700 13px "Liberation Sans", sans-serif; fill: #cfd3d9; stroke: none; text-anchor: middle; }
.bigA { font: 700 28px "Liberation Sans", sans-serif; fill: #dfe2e6; stroke: none; text-anchor: middle; }
.qm { font: 700 18px "Liberation Sans", sans-serif; fill: #666; stroke: none; text-anchor: middle; }
.gr { fill: #7a9cc4; stroke: none; }

.caret { flex: none; width: 0; height: 0; border-left: 4px solid transparent; border-right: 4px solid transparent; border-top: 6px solid #b4b9c1; }
.caret.big { border-left-width: 4.5px; border-right-width: 4.5px; border-top-width: 7px; border-top-color: #a9aeb6; }
.caret.dark { border-top-color: #555; }
.tri { flex: none; width: 0; height: 0; border-top: 6px solid transparent; border-bottom: 6px solid transparent; border-left: 6px solid #c9cdd4; }
.chev { flex: none; width: 8px; height: 8px; border-right: 1.5px solid #777; border-bottom: 1.5px solid #777; transform: rotate(45deg) translate(-2px,-2px); margin-right: 9px; }
.vsep { flex: none; width: 1px; height: 28px; background: #4d5460; }

/* title bar */
.titlebar { flex: none; height: 35px; padding-bottom: 2px; display: flex; align-items: center; background: #2d333d; color: #d5d8dd; }
.logo { width: 22px; height: 26px; flex: none; }
.combo { width: 266px; height: 30px; background: #454d5a; display: flex; align-items: center; padding: 0 4px; flex: none; }
.combotext { margin-left: 3px; font-size: 17px; color: #d5d8dd; }
.eq { width: 10px; height: 14px; flex: none; }
.tt { font-size: 18px; color: #d5d8dd; white-space: nowrap; flex: none; }
.doc { width: 203px; }
.search { flex: none; width: 265px; height: 30px; line-height: 30px; padding-left: 4px; background: #454d5a; color: #9aa2ae; font-size: 16px; font-style: italic; }
.winctl { display: flex; align-items: center; }
.wmin { display: block; width: 14px; height: 2px; background: #c9cdd4; margin-top: 10px; flex: none; }
.wres { display: block; position: relative; width: 15px; height: 13px; border: 2px solid #c9cdd4; flex: none; }
.wclose { display: block; position: relative; width: 18px; height: 18px; flex: none; background: linear-gradient(45deg, transparent 45%, #d5d8dd 45%, #d5d8dd 55%, transparent 55%), linear-gradient(-45deg, transparent 45%, #d5d8dd 45%, #d5d8dd 55%, transparent 55%); }

/* menu */
.menubar { flex: none; height: 30px; display: flex; align-items: center; gap: 39px; padding-left: 19px; background: #2d333d; border-bottom: 2px solid #3f4652; color: #b9bec7; font-size: 17px; white-space: nowrap; }
.menubar span { display: block; height: 30px; line-height: 30px; margin-top: 7px; }
.winctl2 { margin-left: auto; display: flex; align-items: center; gap: 0; padding-right: 6px; }

/* tabs */
.tabs { flex: none; height: 40px; display: flex; align-items: flex-end; padding-left: 30px; gap: 3px; background: #2d333d; }
.tab { height: 33px; line-height: 33px; font-size: 17px; clip-path: polygon(0 100%, 5% 12%, 9% 0, 96% 0, 99% 30%, 100% 100%); flex: none; }
.home { width: 183px; padding-left: 17px; background: #363d49; color: #aeb3bb; }
.active { width: 233px; padding-left: 15px; background: #3f4652; color: #e6e8eb; font-weight: 700; font-size: 18px; white-space: nowrap; }
.x { margin-left: 13px; font-size: 22px; color: #b9bec7; font-weight: 400; }
.plus { width: 33px; margin-left: 3px; text-align: center; background: #363d49; color: #b9bec7; font-size: 22px; font-weight: 700; }

/* toolbars */
.toolbar { flex: none; display: flex; align-items: center; background: #3f4652; }
.layerbar { height: 43px; }
.dimbar { height: 42px; border-top: 2px solid #373d48; border-bottom: 2px solid #373d48; }
.grip { flex: none; display: block; width: 5px; height: 24px; background: repeating-linear-gradient(to bottom, #c6cad0 0 2px, transparent 2px 4px); }
.tsep { flex: none; display: block; width: 1px; height: 28px; background: #8a909a; }
.tgroup { flex: none; display: flex; align-items: center; height: 35px; border: 1px solid #4b525e; padding-right: 3px; }
.layercombo { flex: none; width: 448px; height: 35px; display: flex; align-items: center; padding-left: 9px; background: #d6d6d6; border-top: 2px solid #1e2025; }
.sm { width: 17px; height: 24px; flex: none; }
.sm2 { width: 22px; height: 22px; flex: none; }
.swatch { flex: none; display: block; width: 19px; height: 19px; background: #f2f2f2; border: 1.5px solid #222; }
.swatch.small { width: 19px; height: 20px; }
.lname { font-size: 18px; color: #333; }
.dd { flex: none; height: 34px; display: flex; align-items: center; background: linear-gradient(#e2e2e2, #d2d2d2); border-top: 2px solid #1e2025; color: #333; font: 18px "Noto Sans", "Noto Sans CJK SC", sans-serif; padding-left: 4px; }
.iso { width: 179px; padding-left: 29px; }
.bylayer { width: 225px; }
.bytype { width: 241px; padding-left: 8px; }
.byweight { width: 188px; padding-left: 8px; }
.bycolor { width: 179px; padding-left: 16px; color: #888; background: #c0c0c0; }
.ltline { display: block; flex: none; width: 88px; height: 2px; background: #555; }
.ltline.short { width: 52px; background: #222; }

/* workspace */
.work { flex: none; height: 715px; display: flex; background: #3f4652; }
.dock { flex: none; width: 36px; height: 670px; display: flex; flex-direction: column; align-items: center; gap: 6.7px; background: #3d4450; border: 1px solid #4b525e; border-top: none; }
.dockr { height: 605px; width: 37px; margin-left: 6px; margin-right: 1px; }
.hgrip { flex: none; display: block; width: 22px; height: 11px; margin-top: 1px; margin-bottom: 0; background-image: radial-gradient(circle, #c6cad0 0.9px, transparent 1px); background-size: 3px 3px; }
.hgrip.big { width: 24px; height: 18px; margin-top: 3px; background-image: radial-gradient(circle, #d8dbe0 1px, transparent 1.2px); }
.canvas { flex: none; width: 1816px; height: 713px; margin: 2px 0 0 7px; background: #0e0f11; overflow: hidden; }
.cad { display: block; }

.vlabel { font: 20px "Liberation Sans", "Noto Sans CJK SC", sans-serif; fill: #c8c8c8; }
.tline { fill: none; stroke: #bcbcbc; stroke-width: 2; }
.lf { font-family: "Liberation Serif", "Noto Sans CJK SC", serif; font-size: 27px; letter-spacing: 4px; text-anchor: end; fill: #c4c4c4; }
.lb { font-family: "Liberation Serif", "Noto Sans CJK SC", serif; font-size: 25px; letter-spacing: 4px; text-anchor: end; fill: #c4c4c4; }
.nm { letter-spacing: 1px; font-size: 25px; }
.ucs { fill: none; stroke: #c8c8c8; stroke-width: 1.6; }
.ucst { font: 300 34px Roboto, sans-serif; fill: #c8c8c8; text-anchor: middle; }
.wl { fill: none; stroke: #cfcfcf; stroke-width: 1.6; }
.wl2 { fill: none; stroke: #d0d0d0; stroke-width: 2.6; }
.bx { fill: none; stroke: #c4c4c4; stroke-width: 1.8; }
.ld { fill: none; stroke: #838383; stroke-width: 2; }
.redl { fill: none; stroke: #d5142a; stroke-width: 2.6; }
.redf { fill: #d5142a; }
.cap { font: 500 27px "Noto Sans CJK SC", sans-serif; fill: #e51a1a; }
.cross { fill: none; stroke: #dcdcdc; stroke-width: 1.6; }
.pick { fill: #0e0f11; stroke: #dcdcdc; stroke-width: 2; }
.ring { fill: none; stroke: #3a3a3b; stroke-width: 18; }
.cmp { font: 700 17px "Noto Sans CJK SC", sans-serif; fill: #a9a9a9; text-anchor: middle; }
.wcs { font: 15px "Liberation Sans", sans-serif; fill: #8c8c8e; }

/* command line */
.cmd { flex: none; height: 133px; margin-top: 2px; display: flex; background: #3f4652; }
.cmdside { flex: none; width: 36px; display: flex; flex-direction: column; align-items: center; }
.cmdx { font-size: 28px; line-height: 26px; color: #d8dbe0; margin-top: 1px; }
.cmdw { margin-top: 7px; }
.cmdmain { flex: 1; background: #e9e9e9; color: #333; margin-right: 3px; }
.history { height: 101px; padding: 8px 0 0 4px; border-bottom: 2px solid #5e5e5e; font: 17px/22.4px "Liberation Mono", "Noto Sans CJK SC", monospace; }
.hline { height: 22.4px; white-space: nowrap; }
.cn { font-family: "Noto Sans CJK SC", sans-serif; font-size: 19.5px; line-height: 22.4px; }
.cmdinput { height: 30px; display: flex; align-items: center; padding-left: 7px; }
.cmdicon { width: 22px; height: 26px; flex: none; }
.ph { font: italic 19px "Noto Sans CJK SC", sans-serif; color: #999; }

/* status bar */
.status { flex: none; height: 40px; display: flex; justify-content: space-between; background: #2d333d; border-top: 2px solid #17191d; padding-right: 3px; }
.ltabs { display: flex; align-items: flex-start; padding-left: 17px; font-size: 18px; color: #b9bec7; }
.ltab { display: block; height: 27px; line-height: 29px; flex: none; }
.ltab.cur { width: 68px; text-align: center; background: #3f4652; color: #e6e8eb; font-weight: 700; border-radius: 0 0 9px 9px; }
.ltab.l1 { margin-left: 18px; }
.ltab.l2 { margin-left: 35px; }
.ltab.lp { margin-left: 35px; font-weight: 700; font-size: 20px; }
.sgroups { display: flex; gap: 4px; }
.sg { flex: none; height: 38px; display: flex; align-items: center; background: #3f4652; }
.w44{width:44px;justify-content:center}.w97{width:97px}.w253{width:253px}.w157{width:157px}.w60{width:60px}.w36{width:36px}.w72{width:72px}
.sgtext { font-size: 19px; color: #dfe2e6; }
.st { width: 22px; height: 30px; flex: none; fill: none; stroke: #cfd3d9; stroke-width: 1.5; }
.dots { stroke-width: 3; }
.sb { flex: none; width: 33px; height: 38px; display: flex; align-items: center; justify-content: center; background: #5f90c2; }
.sb .st { stroke: #eef1f4; }
.scale { font-size: 16px; color: #d5d8dd; font-weight: 700; width: 22px; text-align: center; flex: none; }

/* overlays */
.blurpatch { position: absolute; left: 672px; top: 1014px; width: 150px; height: 90px; background: #c4c4c6; filter: blur(11px); }
.blurcore { position: absolute; left: 681px; top: 1040px; width: 133px; height: 40px; background: linear-gradient(#bbbbbd, #adadae); filter: blur(1px); }
.watermark { position: absolute; left: 1694px; top: 17px; display: flex; align-items: center; gap: 3px; opacity: .5; }
.wm-logo { width: 64px; height: 46px; fill: none; stroke: #cfd3d9; stroke-width: 1.4; }
.wm-text { font: 100 47px "Noto Sans CJK SC", sans-serif; color: transparent; -webkit-text-stroke: 1.1px #cfd3d9; line-height: 50px; }
```
